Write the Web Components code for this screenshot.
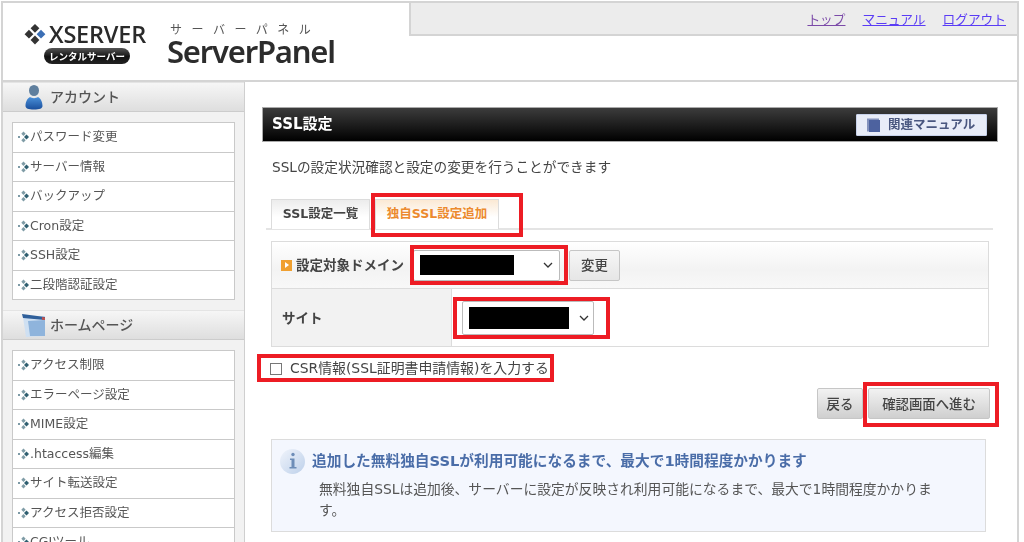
<!DOCTYPE html>
<html lang="ja">
<head>
<meta charset="utf-8">
<title>SSL設定</title>
<style>
  html, body { margin: 0; background: #fff; }
  body {
    width: 1024px; height: 542px; overflow: hidden;
    font-family: "DejaVu Sans", "Noto Sans CJK JP", sans-serif;
    color: #444;
  }
</style>
</head>
<body>
<xs-app>
  <xs-header slot="header"></xs-header>
  <xs-side slot="side">
    <xs-group label="アカウント" icon="user">
      <xs-item>パスワード変更</xs-item>
      <xs-item>サーバー情報</xs-item>
      <xs-item>バックアップ</xs-item>
      <xs-item>Cron設定</xs-item>
      <xs-item>SSH設定</xs-item>
      <xs-item>二段階認証設定</xs-item>
    </xs-group>
    <xs-group label="ホームページ" icon="page">
      <xs-item>アクセス制限</xs-item>
      <xs-item>エラーページ設定</xs-item>
      <xs-item>MIME設定</xs-item>
      <xs-item>.htaccess編集</xs-item>
      <xs-item>サイト転送設定</xs-item>
      <xs-item>アクセス拒否設定</xs-item>
      <xs-item>CGIツール</xs-item>
    </xs-group>
  </xs-side>
  <xs-ssl-page slot="main"></xs-ssl-page>
</xs-app>

<script>
const chevron = `<svg width="10" height="6" viewBox="0 0 10 6"><path d="M1 1l4 4 4-4" fill="none" stroke="#333" stroke-width="1.3"/></svg>`;

// red annotation drawn round whatever is slotted
class XsMark extends HTMLElement {
  constructor() {
    super();
    this.attachShadow({ mode: 'open' }).innerHTML = `
      <style>
        :host { display: inline-flex; position: relative; }
        .box {
          position: absolute; box-sizing: border-box; pointer-events: none;
          border: 4px solid #ed1c24;
          top: var(--t, -4px); right: var(--r, -4px); bottom: var(--b, -4px); left: var(--l, -4px);
        }
      </style>
      <slot></slot><div class="box"></div>`;
  }
}

class XsApp extends HTMLElement {
  constructor() {
    super();
    this.attachShadow({ mode: 'open' }).innerHTML = `
      <style>
        :host {
          display: block; box-sizing: border-box;
          width: 1018px; height: 541px; margin: 1px 0 0 1px;
          border: 2px solid #d4d4d4; border-bottom: 0;
          overflow: hidden; filter: blur(.35px);
        }
        .main { display: flex; height: 460px; }
      </style>
      <slot name="header"></slot>
      <div class="main">
        <slot name="side"></slot>
        <slot name="main"></slot>
      </div>`;
  }
}

class XsHeader extends HTMLElement {
  constructor() {
    super();
    this.attachShadow({ mode: 'open' }).innerHTML = `
      <style>
        :host {
          display: flex; box-sizing: border-box; height: 79px;
          border-bottom: 2px solid #d4d4d4; background: #fff;
        }
        .logo { width: 406px; display: flex; padding: 19px 0 0 21px; box-sizing: border-box; }
        .xs { width: 122px; margin-right: 21px; }
        .xs-top { display: flex; align-items: center; gap: 3px; height: 24px; }
        .xs-name { font: 600 23.500px/24px "Open Sans", sans-serif; color: #2a2a2a; letter-spacing: -.2px; }
        .pill {
          margin: 2px 0 0 20px; width: 86px; height: 16px; border-radius: 8px;
          background: linear-gradient(#555, #111 55%, #222);
          color: #fff; font: 700 9.500px/16px "Noto Sans CJK JP", sans-serif; text-align: center;
        }
        .sub { font: 400 12px/13px "Noto Sans CJK JP", sans-serif; color: #555; letter-spacing: 9.500px; margin: 0 0 0 3px; white-space: nowrap; }
        .sp { font: 600 31px/33px "Noto Sans", sans-serif; color: #2c2c2c; letter-spacing: -1.200px; }
        .bar {
          flex: 1; height: 33px; box-sizing: border-box;
          background: #ececec; border-left: 2px solid #d4d4d4; border-bottom: 2px solid #d4d4d4;
          display: flex; justify-content: flex-end; gap: 17px; padding: 6px 11px 0 0;
          font: 400 12.700px/20px "Noto Sans CJK JP", sans-serif;
        }
        a { color: #5a3cf5; }
        a.seen { color: #7b4aa8; }
      </style>
      <div class="logo">
        <div class="xs">
          <div class="xs-top">
            <svg width="23" height="24" viewBox="0 0 23 24">
              <path d="M11.500 1.500l4.600 4.600-4.600 4.600-4.600-4.600z" fill="#333"/>
              <path d="M5.200 7.600l4.600 4.600-4.600 4.600L.6 12.200z" fill="#333"/>
              <path d="M11.500 13.700l4.600 4.600-4.600 4.600-4.600-4.600z" fill="#333"/>
              <path d="M17.800 7.600l4.600 4.600-4.600 4.600-4.600-4.600z" fill="#3b6fb5"/>
            </svg>
            <span class="xs-name">XSERVER</span>
          </div>
          <div class="pill">レンタルサーバー</div>
        </div>
        <div>
          <div class="sub">サーバーパネル</div>
          <div class="sp">ServerPanel</div>
        </div>
      </div>
      <div class="bar">
        <a class="seen" href="#">トップ</a><a href="#">マニュアル</a><a href="#">ログアウト</a>
      </div>`;
  }
}

class XsSide extends HTMLElement {
  constructor() {
    super();
    this.attachShadow({ mode: 'open' }).innerHTML = `
      <style>
        :host {
          display: block; box-sizing: border-box; flex: none; width: 242px;
          background: #f2f2f2; border-right: 1px solid #cfcfcf;
        }
      </style>
      <slot></slot>`;
  }
}

class XsGroup extends HTMLElement {
  constructor() {
    super();
    const icons = {
      user: `<svg width="18" height="26" viewBox="0 0 18 26">
        <defs><linearGradient id="u" x1="0" y1="0" x2="0" y2="1"><stop offset="0" stop-color="#4a90d9"/><stop offset="1" stop-color="#1a4f9c"/></linearGradient></defs>
        <ellipse cx="9" cy="6.500" rx="5" ry="5.500" fill="#5f7f9e"/>
        <path d="M5 13c2 1.500 6 1.500 8 0 3 1.500 4.500 5.500 4.500 9 0 2.500-3 3.500-8.500 3.500S.5 24.500.5 22c0-3.500 1.500-7.500 4.500-9z" fill="url(#u)"/>
      </svg>`,
      page: `<svg width="26" height="26" viewBox="0 0 26 26">
        <path d="M2 5l22-1v20L5 25z" fill="#cfe0f2"/>
        <path d="M7 9l17-1v16H9z" fill="#8fb4dc"/>
        <path d="M1 2l23 3v3L2 6z" fill="#2f5f9a"/>
        <path d="M21 5l3 .4v2.600L21 7.700z" fill="#c0504d"/>
      </svg>`
    };
    this.attachShadow({ mode: 'open' }).innerHTML = `
      <style>
        :host { display: block; margin-bottom: 10px; }
        .head {
          display: flex; align-items: center; height: 30px; box-sizing: border-box;
          background: linear-gradient(#f6f6f6, #dedede);
          border-top: 1px solid #e4e4e4; border-bottom: 1px solid #cccccc;
          font: 500 14px/1 "Noto Sans CJK JP", sans-serif; color: #555;
        }
        .ico { width: 47px; display: flex; justify-content: center; padding-left: 15px; box-sizing: border-box; }
        .lab { margin-top: -2px; }
        .box { margin: 10px 9px 0 9px; background: #fff; border: 1px solid #c9c9c9; border-bottom: 0; }
      </style>
      <div class="head"><span class="ico">${icons[this.getAttribute('icon')]}</span><span class="lab">${this.getAttribute('label')}</span></div>
      <div class="box"><slot></slot></div>`;
  }
}

class XsItem extends HTMLElement {
  constructor() {
    super();
    this.attachShadow({ mode: 'open' }).innerHTML = `
      <style>
        :host {
          display: flex; align-items: center; box-sizing: border-box; height: 29.500px;
          border-bottom: 1px solid #c9c9c9; padding-left: 5px;
          font: 400 12.500px/1 "DejaVu Sans", "Noto Sans CJK JP", sans-serif; color: #555;
        }
      </style>
      <svg width="12" height="12" viewBox="0 0 12 12">
        <rect x="0" y="5" width="2" height="2" fill="#7d9aa6"/>
        <path d="M5.500 0.500l2.200 2.200-2.200 2.200-2.200-2.200z" fill="#7f9ca6"/>
        <path d="M8.500 3.500L11 6 8.500 8.500 6 6z" fill="#2f5f70"/>
        <path d="M5.500 7.100l2.200 2.200-2.200 2.200-2.200-2.200z" fill="#7f9ca6"/>
      </svg>
      <slot></slot>`;
  }
}

class XsTitleBar extends HTMLElement {
  constructor() {
    super();
    this.attachShadow({ mode: 'open' }).innerHTML = `
      <style>
        :host {
          display: flex; align-items: center; justify-content: space-between;
          box-sizing: border-box; height: 35px; padding: 0 10px 0 9px;
          background: linear-gradient(#3c3c3c, #000);
          border: 1px solid #aaa;
          color: #fff; font: 700 15px/1 "DejaVu Sans", "Noto Sans CJK JP", sans-serif;
        }
        .manual {
          display: flex; align-items: center; gap: 8px; box-sizing: border-box;
          width: 131px; height: 22px; padding-left: 10px;
          background: #e8ecf8; border: 1px solid #c7d1ea; border-radius: 1px;
          color: #4a5780; font: 700 12.500px/1 "Noto Sans CJK JP", sans-serif;
        }
      </style>
      <slot></slot>
      <div class="manual">
        <svg width="13" height="15" viewBox="0 0 13 15">
          <path d="M0 1.500h12V3H2v11.500H0z" fill="#8392bd"/>
          <rect x="2" y="3" width="11" height="12" fill="#4d629f"/>
        </svg>
        関連マニュアル
      </div>`;
  }
}

class XsTab extends HTMLElement {
  constructor() {
    super();
    this.attachShadow({ mode: 'open' }).innerHTML = `
      <style>
        :host {
          display: flex; align-items: center; justify-content: center; box-sizing: border-box;
          height: 30px; border: 1px solid #dcdcdc; border-bottom: 0; margin-bottom: -1px;
          background: linear-gradient(#ececec, #fff 60%);
          font: 700 12.500px/1 "DejaVu Sans", "Noto Sans CJK JP", sans-serif; color: #444;
        }
        :host([active]) { background: linear-gradient(#fbe9d4, #fff 60%); color: #ec8a2e; }
      </style>
      <slot></slot>`;
  }
}

class XsSelect extends HTMLElement {
  constructor() {
    super();
    this.attachShadow({ mode: 'open' }).innerHTML = `
      <style>
        :host {
          display: flex; align-items: center; justify-content: space-between; box-sizing: border-box;
          width: var(--w); height: var(--h); padding: 0 var(--pr) 0 var(--pl);
          background: #fff; border: 1px solid #bbb; border-radius: 2px;
        }
        .val { width: var(--bw); height: var(--bh); background: #000; }
      </style>
      <div class="val"></div>${chevron}`;
  }
}

class XsButton extends HTMLElement {
  constructor() {
    super();
    this.attachShadow({ mode: 'open' }).innerHTML = `
      <style>
        :host {
          display: flex; align-items: center; justify-content: center; box-sizing: border-box;
          width: var(--w); height: var(--h, 31px);
          background: var(--bg, linear-gradient(#f2f2f2, #cfcfcf));
          border: 1px solid #c6c6c6; border-radius: 2px;
          font: 500 13.400px/1 "Noto Sans CJK JP", sans-serif; color: #444;
        }
      </style>
      <slot></slot>`;
  }
}

class XsInfo extends HTMLElement {
  constructor() {
    super();
    this.attachShadow({ mode: 'open' }).innerHTML = `
      <style>
        :host {
          display: block; box-sizing: border-box; height: 93px;
          background: #f4f7fe; border: 1px solid #dcdcdc;
          padding: 8px 8px 0 8px;
        }
        .top { display: flex; align-items: center; gap: 7px; height: 26px; }
        .title { font: 700 14.700px/1 "DejaVu Sans", "Noto Sans CJK JP", sans-serif; color: #4a6da8; white-space: nowrap; }
        .body {
          margin: 5px 0 0 39px; width: 615px;
          font: 400 13.800px/21px "DejaVu Sans", "Noto Sans CJK JP", sans-serif; color: #555;
        }
      </style>
      <div class="top">
        <svg width="25" height="25" viewBox="0 0 25 25">
          <defs><linearGradient id="i" x1="0" y1="0" x2="1" y2="1"><stop offset="0" stop-color="#f0f4fb"/><stop offset="1" stop-color="#bdd0ea"/></linearGradient></defs>
          <circle cx="12.500" cy="12.500" r="12.500" fill="url(#i)"/>
          <circle cx="13" cy="5.500" r="1.700" fill="#6d8db8"/>
          <path d="M10 9.500h4.500V18H16.500v1.500h-7V18h2V11H10z" fill="#6d8db8"/>
        </svg>
        <div class="title"><slot name="title"></slot></div>
      </div>
      <div class="body"><slot></slot></div>`;
  }
}

class XsSslPage extends HTMLElement {
  constructor() {
    super();
    this.attachShadow({ mode: 'open' }).innerHTML = `
      <style>
        :host {
          display: block; flex: none; box-sizing: border-box; width: 754px;
          padding: 25px 0 0 17px;
          font: 400 13px/1 "DejaVu Sans", "Noto Sans CJK JP", sans-serif; color: #444;
        }
        .wrap { width: 736px; }
        .desc { margin: 16px 0 0 10px; height: 19px; line-height: 19px; font-size: 13.670px; color: #444; white-space: nowrap; }
        .tabs {
          display: flex; gap: 5px; margin: 22px 5px 0 4px; padding-left: 5px; height: 29px;
          border-bottom: 2px solid #e4e4e4;
        }
        .tab1 { width: 99px; }
        .tab2 { width: 124px; }
        .table {
          margin: 11px 9px 0 9px; border: 1px solid #dcdcdc; box-sizing: border-box; height: 106px;
        }
        .r1 {
          display: flex; align-items: center; height: 47px; box-sizing: border-box; padding-left: 9px;
          background: linear-gradient(#fff, #f3f3f3 60%, #f8f8f8);
          border-bottom: 1px solid #dcdcdc;
          font: 700 13.500px/1 "Noto Sans CJK JP", sans-serif; color: #444;
        }
        .bullet { width: 11px; height: 11px; background: #f0a030; margin-right: 4px; display: flex; align-items: center; justify-content: center; }
        .bullet i { border-left: 4px solid #fff; border-top: 3px solid transparent; border-bottom: 3px solid transparent; }
        .r1 .lab { width: 117px; white-space: nowrap; }
        .r2 { display: flex; height: 57px; }
        .th {
          width: 180px; box-sizing: border-box; padding-left: 10px; background: #f2f2f2;
          display: flex; align-items: center; border-right: 1px solid #dcdcdc;
          font: 700 13.500px/1 "Noto Sans CJK JP", sans-serif; color: #444;
        }
        .td { display: flex; align-items: center; padding-left: 10px; }
        .check { display: flex; align-items: center; margin: 6px 0 0 8px; height: 31px; }
        .box { width: 12px; height: 12px; border: 1px solid #777; background: #fff; box-sizing: border-box; }
        .csr { font-size: 13.900px; color: #444; white-space: nowrap; }
        .actions { display: flex; justify-content: flex-end; gap: 5px; margin: 4px 8px 0 0; }
        .info { margin: 20px 12px 0 9px; }
      </style>
      <div class="wrap">
        <xs-title-bar>SSL設定</xs-title-bar>
        <div class="desc">SSLの設定状況確認と設定の変更を行うことができます</div>
        <div class="tabs">
          <xs-tab class="tab1">SSL設定一覧</xs-tab>
          <xs-mark style="--t:-6px;--b:-9px;--l:-4px;--r:-24px"><xs-tab class="tab2" active>独自SSL設定追加</xs-tab></xs-mark>
        </div>
        <div class="table">
          <div class="r1">
            <span class="bullet"><i></i></span><span class="lab">設定対象ドメイン</span>
            <xs-mark style="--t:-5px;--b:-4px;--l:-3px;--r:-8px">
              <xs-select style="--w:147px;--h:31px;--pl:6px;--pr:6px;--bw:94px;--bh:20px"></xs-select>
            </xs-mark>
            <xs-button style="--w:51px;--h:31px;margin-left:9px;--bg:linear-gradient(#f6f6f6,#e6e6e6)">変更</xs-button>
          </div>
          <div class="r2">
            <div class="th">サイト</div>
            <div class="td">
              <xs-mark style="--t:-4px;--b:-4px;--l:-9px;--r:-16px">
                <xs-select style="--w:132px;--h:34px;--pl:6px;--pr:4px;--bw:100px;--bh:22px"></xs-select>
              </xs-mark>
            </div>
          </div>
        </div>
        <div class="check">
          <xs-mark style="--t:-8px;--b:-7px;--l:-13px;--r:-5px">
            <span style="display:flex;align-items:center;gap:8px">
              <span class="box"></span><span class="csr">CSR情報(SSL証明書申請情報)を入力する</span>
            </span>
          </xs-mark>
        </div>
        <div class="actions">
          <xs-button style="--w:46px">戻る</xs-button>
          <xs-mark style="--t:-6px;--b:-8px;--l:-5px;--r:-9px"><xs-button style="--w:122px">確認画面へ進む</xs-button></xs-mark>
        </div>
        <xs-info class="info">
          <span slot="title">追加した無料独自SSLが利用可能になるまで、最大で1時間程度かかります</span>
          無料独自SSLは追加後、サーバーに設定が反映され利用可能になるまで、最大で1時間程度かかります。
        </xs-info>
      </div>`;
  }
}

customElements.define('xs-mark', XsMark);
customElements.define('xs-app', XsApp);
customElements.define('xs-header', XsHeader);
customElements.define('xs-side', XsSide);
customElements.define('xs-group', XsGroup);
customElements.define('xs-item', XsItem);
customElements.define('xs-title-bar', XsTitleBar);
customElements.define('xs-tab', XsTab);
customElements.define('xs-select', XsSelect);
customElements.define('xs-button', XsButton);
customElements.define('xs-info', XsInfo);
customElements.define('xs-ssl-page', XsSslPage);
</script>
</body>
</html>
